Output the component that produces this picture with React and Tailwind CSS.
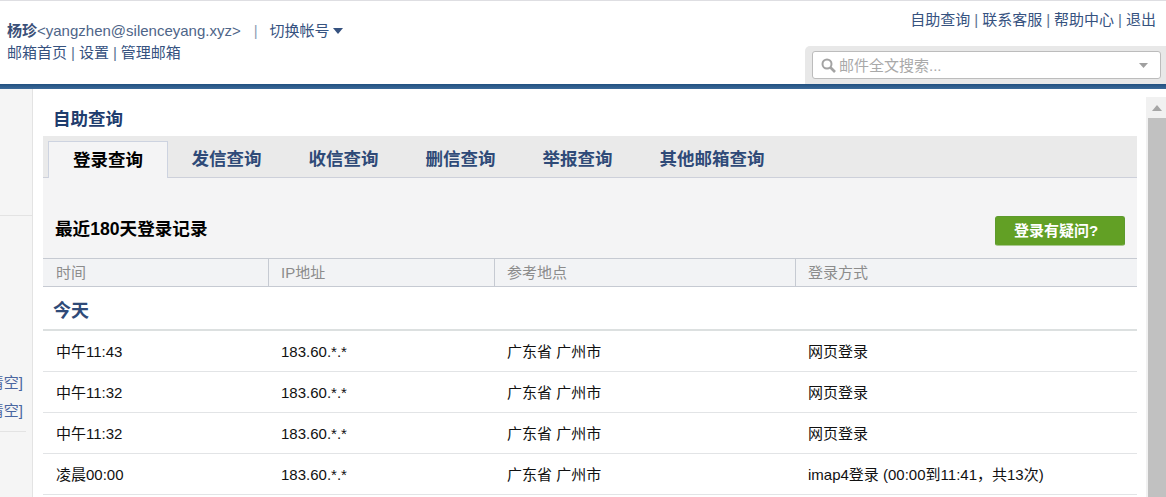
import React from "react";

const font = { fontFamily: '"Liberation Sans", "Noto Sans CJK SC", sans-serif' };
const tabs = ["发信查询", "收信查询", "删信查询", "举报查询", "其他邮箱查询"];
const rows = [
  ["中午11:43", "网页登录"],
  ["中午11:32", "网页登录"],
  ["中午11:32", "网页登录"],
  ["凌晨00:00", "imap4登录 (00:00到11:41，共13次)"],
];

function Sep() {
  return <span className="mx-[4px] text-[#5a7191]">|</span>;
}

export default function App() {
  return (
    <div style={font} className="flex h-[497px] w-[1166px] flex-col overflow-hidden bg-white text-[15px]">
      <header className="flex h-[84px] justify-between border-t border-[#dedee2] text-[#36527f]">
        <div className="pl-[7px] pt-[20px] leading-[20px]">
          <div className="flex h-[20px] items-center">
            <b className="text-[#3a5078]">杨珍</b>
            <span className="text-[#4e6588]">&lt;yangzhen@silenceyang.xyz&gt;</span>
            <span className="ml-[13px] mr-[12px] text-[#8c9db5]">|</span>
            <span>切换帐号</span>
            <svg width="10" height="6" viewBox="0 0 10 6" className="ml-[3px]"><path d="M0 0h10L5 6z" fill="#36527f" /></svg>
          </div>
          <div className="mt-[2px] h-[20px]">
            邮箱首页<Sep />设置<Sep />管理邮箱
          </div>
        </div>
        <div className="flex w-[361px] flex-col items-end">
          <div className="pr-[10px] pt-[9px] leading-[20px]">
            自助查询<Sep />联系客服<Sep />帮助中心<Sep />退出
          </div>
          <div className="mt-[16px] flex h-[38px] w-[361px] rounded-tl-[5px] bg-[#e8e8e8] pl-[7px] pr-[5px] pt-[5px]">
            <div className="flex h-[28px] w-full items-center rounded-[3px] border border-[#bcbcbc] bg-white pl-[8px] pr-[12px]">
              <svg width="15" height="15" viewBox="0 0 15 15" fill="none" stroke="#a3a3a3" className="shrink-0">
                <circle cx="6" cy="6" r="4.5" strokeWidth="2" />
                <path d="M9.5 9.5L14 14" strokeWidth="2.6" />
              </svg>
              <span className="ml-[3px] flex-1 pt-[2px] text-[#a9a9a9]">邮件全文搜索...</span>
              <svg width="9" height="5" viewBox="0 0 9 5"><path d="M0 0h9L4.5 5z" fill="#a0a0a0" /></svg>
            </div>
          </div>
        </div>
      </header>
      <div className="h-[5px] bg-gradient-to-b from-[#215080] to-[#3c6a99]" />

      <div className="flex min-h-0 flex-1">
        <aside className="w-[33px] shrink-0 border-r border-[#e3e3e3] bg-[#f5f5f5]">
          <div className="h-[127px] border-b border-[#e3e3e3]" />
          <div className="mt-[152px] flex h-[28px] items-center justify-end overflow-hidden whitespace-nowrap pr-[9px] pt-[2px] text-[#4a66a0]">清空]</div>
          <div className="flex h-[28px] items-center justify-end overflow-hidden whitespace-nowrap pr-[9px] pt-[2px] text-[#4a66a0]">清空]</div>
          <div className="mr-[6px] mt-[7px] border-b border-[#e3e3e3]" />
        </aside>

        <main className="min-w-0 flex-1 pl-[10px] pr-[9px]">
          <h1 className="ml-[10px] mt-[19px] h-[28px] text-[17.5px] font-bold leading-[22px] text-[#1f3d6e]">自助查询</h1>
          <div className="flex h-[42px] items-end border-b border-[#cdd0da] bg-[#eaeaea] pl-[5px]">
            <div className="-mb-px flex h-[37px] w-[120px] items-center justify-center border border-b-0 border-[#cdd3e0] bg-[#f4f4f5] text-[17.5px] font-bold text-black">登录查询</div>
            {tabs.map((t) => (
              <div key={t} className="flex h-[36px] items-center px-[23.5px] pt-[1px] text-[17.5px] font-bold text-[#2f4a78]">{t}</div>
            ))}
          </div>
          <div className="flex h-[80px] items-center justify-between bg-[#f4f4f5] pl-[12px] pr-[12px]">
            <div className="mt-[22px] text-[17.6px] font-bold text-black">最近180天登录记录</div>
            <button className="mt-[26px] h-[30px] w-[130px] rounded-[3px] border border-[#5d9a2c] border-b-[#a9c88f] bg-[#62a025] pr-[8px] text-[15px] font-bold text-white">登录有疑问?</button>
          </div>
          <div className="grid h-[29px] grid-cols-[226px_226px_301px_1fr] items-stretch border-y border-[#c6cad2] bg-[#f2f3f5] text-[#8c8c8c]">
            <div className="flex items-center border-r border-[#c6cad2] pl-[13px] pt-[2px]">时间</div>
            <div className="flex items-center border-r border-[#c6cad2] pl-[12px] pt-[2px]">IP地址</div>
            <div className="flex items-center border-r border-[#c6cad2] pl-[12px] pt-[2px]">参考地点</div>
            <div className="flex items-center pl-[12px] pt-[2px]">登录方式</div>
          </div>
          <div className="flex h-[44px] items-center border-b-2 border-[#dce0e0] pl-[10px] pt-[6px] text-[18px] font-bold text-[#2f4a78]">今天</div>
          {rows.map(([time, way], i) => (
            <div key={i} className="grid h-[41px] grid-cols-[226px_226px_301px_1fr] items-center border-b border-[#e2e4e6] pt-[2px] text-[#111]">
              <div className="pl-[13px]">{time}</div>
              <div className="pl-[12px]">183.60.*.*</div>
              <div className="pl-[12px]">广东省 广州市</div>
              <div className="pl-[12px]">{way}</div>
            </div>
          ))}
        </main>

        <div className="mt-[8px] flex w-[20px] shrink-0 flex-col border-l-2 border-[#f1f1f1] bg-[#f1f1f1]">
          <div className="flex h-[21px] items-center justify-center">
            <svg width="10" height="6" viewBox="0 0 10 6"><path d="M0 6h10L5 0z" fill="#a6a6a6" /></svg>
          </div>
          <div className="flex-1 bg-[#c1c1c1]" />
        </div>
      </div>
    </div>
  );
}
